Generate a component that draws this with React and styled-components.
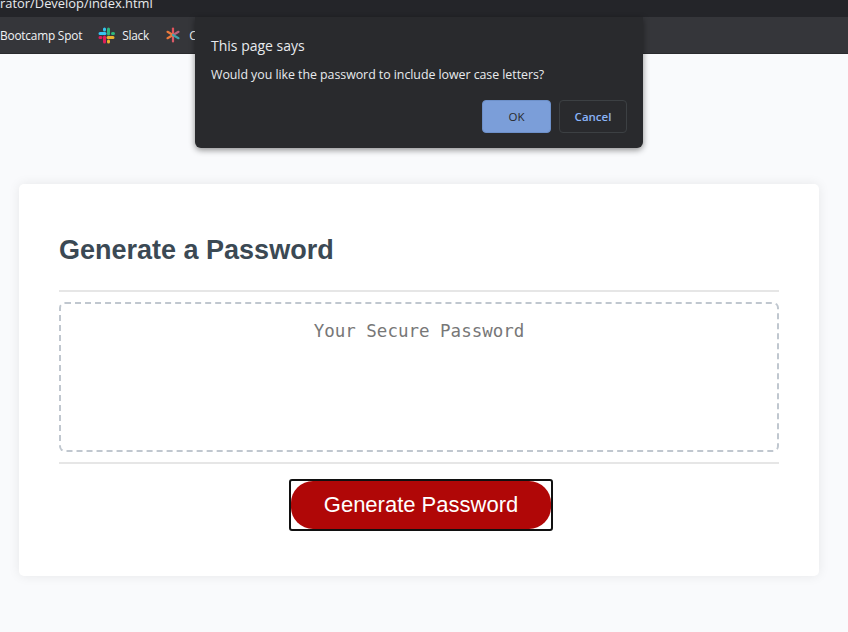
import React from "react";
import styled, { createGlobalStyle } from "styled-components";

const GlobalStyle = createGlobalStyle`
  html, body {
    margin: 0;
    padding: 0;
    height: 632px;
    overflow: hidden;
    background: #f9fafc;
    font-family: "Liberation Sans", Arial, sans-serif;
  }
  * {
    box-sizing: border-box;
  }
`;

const Page = styled.div`
  position: relative;
  width: 848px;
  height: 632px;
  overflow: hidden;
`;

const AddressBar = styled.div`
  height: 17px;
  background: #242529;
  overflow: hidden;
`;

const AddressText = styled.div`
  margin-top: -7px;
  color: #e8eaed;
  font-family: "Open Sans", sans-serif;
  font-size: 12.9px;
  line-height: 20px;
  white-space: nowrap;
`;

const Bookmarks = styled.div`
  height: 37px;
  background: #35363a;
  border-bottom: 1px solid #2a2b2e;
  display: flex;
  align-items: center;
  overflow: hidden;
  color: #f1f3f4;
  font-family: "Open Sans", sans-serif;
  font-size: 11.85px;
  letter-spacing: -0.2px;
`;

const Bookmark = styled.div`
  display: flex;
  align-items: center;
  gap: ${(p) => p.$iconGap || 7}px;
  margin-left: ${(p) => p.$gap}px;
  white-space: nowrap;
`;

const Main = styled.main`
  padding: 130px 29px 0 19px;
`;

const Card = styled.section`
  width: 800px;
  height: 392px;
  background: #fff;
  border-radius: 5px;
  box-shadow: 0 0 12px rgba(0, 0, 0, 0.08);
  padding: 0 40px;
`;

const Header = styled.header`
  height: 108px;
  display: flex;
  align-items: center;
  padding-top: 25px;
  border-bottom: 2px solid #e6e6e6;
`;

const Title = styled.h2`
  margin: 0;
  color: hsl(206, 17%, 28%);
  font-size: 27px;
  font-weight: 700;
  line-height: 32px;
`;

const Body = styled.div`
  padding: 10px 0;
  border-bottom: 2px solid #e6e6e6;
`;

const Output = styled.textarea`
  display: block;
  width: 100%;
  height: 150px;
  padding: 17px 16px;
  resize: none;
  outline: none;
  border: 2px dashed #c0c7cf;
  border-radius: 6px;
  background: #fff;
  font-family: "DejaVu Sans Mono", monospace;
  font-size: 17.5px;
  line-height: 20px;
  text-align: center;
  &::placeholder {
    color: #777;
    opacity: 1;
  }
`;

const Footer = styled.footer`
  display: flex;
  justify-content: center;
  padding-top: 15px;
  padding-left: 4px;
`;

const FocusRing = styled.div`
  width: 264px;
  height: 52px;
  border: 2px solid #101010;
  border-radius: 3px;
`;

const GenerateButton = styled.button`
  display: block;
  width: 100%;
  height: 100%;
  padding: 0;
  border: none;
  border-radius: 22px;
  background: #b00707;
  color: #fff;
  font-family: "Liberation Sans", Arial, sans-serif;
  font-size: 22px;
  cursor: pointer;
`;

const Dialog = styled.div`
  position: absolute;
  left: 195px;
  top: 17px;
  width: 448px;
  height: 131px;
  padding: 19px 16px 16px;
  background: #292a2d;
  border-radius: 0 0 6px 6px;
  box-shadow: 0 2px 6px rgba(0, 0, 0, 0.45);
  color: #e8eaed;
  font-family: "Open Sans", sans-serif;
`;

const DialogTitle = styled.div`
  font-size: 14px;
  line-height: 19px;
`;

const DialogText = styled.div`
  margin-top: 11px;
  font-size: 12.4px;
  line-height: 18px;
  letter-spacing: -0.05px;
`;

const DialogActions = styled.div`
  display: flex;
  justify-content: flex-end;
  gap: 8px;
  margin-top: 16px;
`;

const DialogButton = styled.button`
  width: ${(p) => (p.$primary ? 69 : 68)}px;
  height: 33px;
  padding: 0;
  border-radius: 4px;
  border: 1px solid ${(p) => (p.$primary ? "#6d90c9" : "#3c4043")};
  background: ${(p) => (p.$primary ? "#7b9ed9" : "transparent")};
  color: ${(p) => (p.$primary ? "#292a2d" : "#8ab4f8")};
  font-family: "Open Sans", sans-serif;
  font-size: 11.5px;
  font-weight: ${(p) => (p.$primary ? 400 : 600)};
`;

const SlackIcon = () => (
  <svg width="17" height="17" viewBox="0 0 17 17">
    <g strokeWidth="3" strokeLinecap="round" fill="none">
      <path d="M2 6.5h5M6.5 2v1" stroke="#36c5f0" />
      <path d="M10.5 2v5M14.5 6.5h1" stroke="#2eb67d" />
      <path d="M15 10.5h-5M10.5 15v-1" stroke="#ecb22e" />
      <path d="M6.5 15v-5M2 10.5h1" stroke="#e01e5a" />
    </g>
  </svg>
);

const AsteriskIcon = () => (
  <svg width="16" height="16" viewBox="0 0 16 16">
    <g strokeWidth="2.2" strokeLinecap="round">
      <path d="M8 8V1.5" stroke="#e2545c" />
      <path d="M8 8v6.5" stroke="#d95a68" />
      <path d="M8 8L2.5 4.8" stroke="#ec7a3c" />
      <path d="M8 8l-5.5 3.2" stroke="#ec7a3c" />
      <path d="M8 8l5.5-3.2" stroke="#b9627c" />
      <path d="M8 8l5.5 3.2" stroke="#3fa3ad" />
    </g>
  </svg>
);

export default function App() {
  return (
    <Page>
      <GlobalStyle />
      <AddressBar>
        <AddressText>rator/Develop/index.html</AddressText>
      </AddressBar>
      <Bookmarks>
        <Bookmark $gap={0}>Bootcamp Spot</Bookmark>
        <Bookmark $gap={16}>
          <SlackIcon />
          Slack
        </Bookmark>
        <Bookmark $gap={16} $iconGap={8}>
          <AsteriskIcon />
          Calendar
        </Bookmark>
      </Bookmarks>
      <Main>
        <Card>
          <Header>
            <Title>Generate a Password</Title>
          </Header>
          <Body>
            <Output readOnly placeholder="Your Secure Password" />
          </Body>
          <Footer>
            <FocusRing>
              <GenerateButton>Generate Password</GenerateButton>
            </FocusRing>
          </Footer>
        </Card>
      </Main>
      <Dialog>
        <DialogTitle>This page says</DialogTitle>
        <DialogText>Would you like the password to include lower case letters?</DialogText>
        <DialogActions>
          <DialogButton $primary>OK</DialogButton>
          <DialogButton>Cancel</DialogButton>
        </DialogActions>
      </Dialog>
    </Page>
  );
}
